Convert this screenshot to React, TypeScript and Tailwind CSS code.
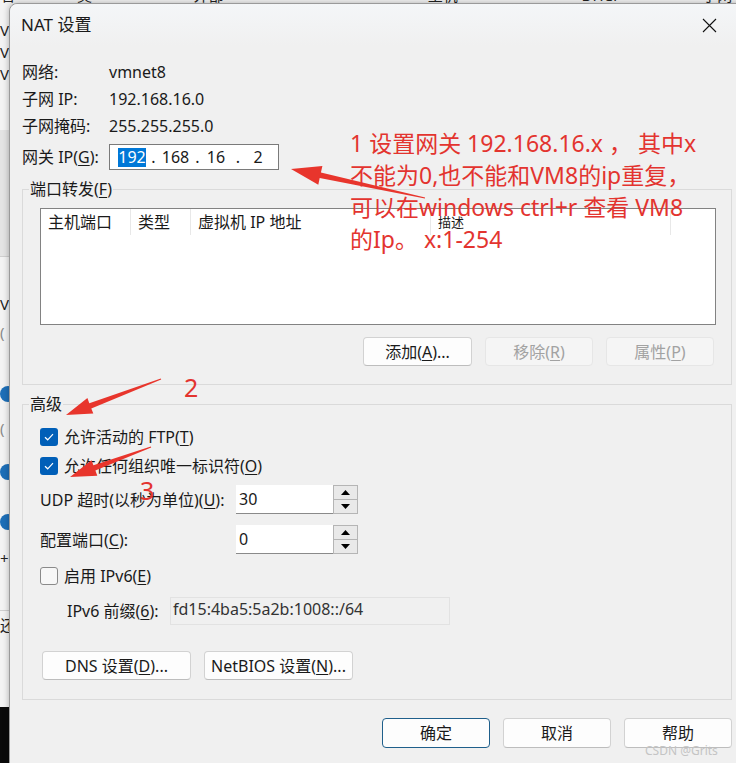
import React from "react";

// shared font stacks
const ui = { fontFamily: '"Noto Sans", "Noto Sans CJK SC", sans-serif' };
const red = { fontFamily: '"Noto Sans", "Noto Sans CJK SC", sans-serif' };

// underlined accelerator letter
const U: React.FC<{ c: string }> = ({ c }) => <span className="underline underline-offset-2">{c}</span>;

// red annotation arrow, tip is where it points
const Arrow: React.FC<{ x1: number; y1: number; x2: number; y2: number; head?: number }> = ({
  x1,
  y1,
  x2,
  y2,
  head = 26,
}) => {
  const dx = x2 - x1;
  const dy = y2 - y1;
  const len = Math.sqrt(dx * dx + dy * dy);
  const ux = dx / len;
  const uy = dy / len;
  const nx = -uy;
  const ny = ux;
  const bx = x2 - ux * head;
  const by = y2 - uy * head;
  const hw = head * 0.32;
  const p = (x: number, y: number) => `${x.toFixed(1)},${y.toFixed(1)}`;
  const pts = [
    p(x1 + nx * 0.6, y1 + ny * 0.6),
    p(bx + nx * 2.8, by + ny * 2.8),
    p(bx + nx * hw, by + ny * hw),
    p(x2, y2),
    p(bx - nx * hw, by - ny * hw),
    p(bx - nx * 2.8, by - ny * 2.8),
    p(x1 - nx * 0.6, y1 - ny * 0.6),
  ].join(" ");
  return <polygon points={pts} fill="#e8352c" />;
};

const Check: React.FC<{ on?: boolean }> = ({ on }) =>
  on ? (
    <span className="flex h-[18px] w-[18px] items-center justify-center rounded-[3px] bg-[#005fb8]">
      <svg width="10" height="8" viewBox="0 0 10 8">
        <path d="M1 4.2 L3.7 6.8 L9 1.2" fill="none" stroke="#fff" strokeWidth="1.2" />
      </svg>
    </span>
  ) : (
    <span className="h-[18px] w-[18px] rounded-[3px] border border-[#8a8a8a] bg-[#f7f7f7]" />
  );

const Btn: React.FC<{ children: React.ReactNode; w: string; disabled?: boolean; primary?: boolean }> = ({
  children,
  w,
  disabled,
  primary,
}) => (
  <div
    className={
      "flex h-[29px] items-center justify-center rounded-[4px] border text-[16px] " +
      w +
      (disabled
        ? " border-[#e6e6e6] bg-[#f5f5f5] text-[#a2a2a2]"
        : primary
        ? " border-[#1f5f8b] bg-[#fdfdfd] text-[#1a1a1a]"
        : " border-[#d2d2d2] border-b-[#bdbdbd] bg-[#fdfdfd] text-[#1a1a1a]")
    }
  >
    {children}
  </div>
);

const Spin: React.FC<{ value: string }> = ({ value }) => (
  <div className="flex h-[29px]">
    <div className="flex w-[97px] items-center border-b border-[#8a8a8a] bg-white pl-[3px]">{value}</div>
    <div className="flex w-[25px] flex-col border border-[#b5b5b5] bg-[#f0f0f0]">
      <div className="flex flex-1 items-center justify-center border-b border-[#b5b5b5] bg-[#e9e9e9]">
        <svg width="9" height="5" viewBox="0 0 9 5">
          <path d="M0 5 L4.5 0 L9 5 Z" fill="#000" />
        </svg>
      </div>
      <div className="flex flex-1 items-center justify-center bg-[#e9e9e9]">
        <svg width="9" height="5" viewBox="0 0 9 5">
          <path d="M0 0 L4.5 5 L9 0 Z" fill="#000" />
        </svg>
      </div>
    </div>
  </div>
);

// the NAT settings dialog
const App: React.FC = () => {
  return (
    <div className="relative h-[763px] w-[736px] overflow-hidden bg-[#f3f3f3] text-[#1a1a1a]" style={ui}>
      {/* window behind the dialog */}
      <div className="absolute inset-0 text-[15px] text-[#222]">
        <div className="-mt-[15px] flex h-[20px] gap-[60px] overflow-hidden pl-[0px] leading-[20px]">
          <span>名称</span>
          <span>类型</span>
          <span className="ml-[40px]">外部连接</span>
          <span className="ml-[140px]">主机连接</span>
          <span className="ml-[60px]">DHCP</span>
          <span className="ml-[20px]">子网地址</span>
        </div>
        <div className="flex flex-col pl-[0px] leading-[22px]">
          <span className="mt-[14px]">VI</span>
          <span>VI</span>
          <span>VI</span>
        </div>
        <div className="mt-[45px] h-[127px] border-b border-[#cfcfcf] bg-[#e4e4e4]" />
        <div className="flex flex-col leading-[28px]">
          <span className="mt-[33px]">VI</span>
          <span className="text-[#888]">(</span>
          <span className="mt-[40px] h-[16px] w-[16px] rounded-full bg-[#1d6fb8]" />
          <span className="mt-[12px] text-[#888]">(</span>
          <span className="mt-[22px] h-[16px] w-[16px] rounded-full bg-[#1d6fb8]" />
          <span className="mt-[34px] h-[16px] w-[16px] rounded-full bg-[#1d6fb8]" />
          <span className="mt-[14px]">+</span>
          <span className="mt-[38px] border-t border-[#cfcfcf]">还</span>
        </div>
        <div className="absolute bottom-0 left-0 h-[56px] w-[12px] bg-[#0a0a0a]" />
      </div>

      {/* dialog */}
      <div className="absolute left-[9px] top-[3px] h-[780px] w-[760px] rounded-[8px] border border-[#9a9a9a] bg-[#f0f0f0] text-[16px] shadow-[0_0_6px_rgba(0,0,0,0.3)]">
        <div className="flex h-[42px] items-center rounded-t-[8px] bg-gradient-to-b from-[#f4f6f8] to-[#f0f0f0] pl-[11px]">
          <span className="w-[678px] text-[17px]">NAT 设置</span>
          <span className="flex w-[20px] justify-center">
            <svg width="15" height="15" viewBox="0 0 15 15">
              <path d="M1 1 L14 14 M14 1 L1 14" stroke="#111" strokeWidth="1.1" />
            </svg>
          </span>
        </div>

        <div className="pl-[12px] pt-[12px]">
          <div className="flex h-[27px] items-center">
            <span className="w-[87px]">网络:</span>
            <span>vmnet8</span>
          </div>
          <div className="flex h-[27px] items-center">
            <span className="w-[87px]">子网 IP:</span>
            <span>192.168.16.0</span>
          </div>
          <div className="flex h-[28px] items-center">
            <span className="w-[87px]">子网掩码:</span>
            <span>255.255.255.0</span>
          </div>
          <div className="mt-[4px] flex h-[26px] items-center">
            <span className="w-[87px]">
              网关 IP(<U c="G" />):
            </span>
            <div className="flex h-[26px] w-[170px] items-center border border-[#7a7a7a] bg-white pl-[8px]">
              <span className="w-[28px] bg-[#0078d7] text-center leading-[19px] text-white">192</span>
              <span className="w-[15px] text-center">.</span>
              <span className="w-[29px] text-center">168</span>
              <span className="w-[15px] text-center">.</span>
              <span className="w-[22px] text-center">16</span>
              <span className="w-[22px] text-center">.</span>
              <span className="w-[18px] text-center">2</span>
            </div>
          </div>

          {/* port forwarding */}
          <div className="relative mt-[19px] h-[196px] w-[710px] border border-[#dadada] pl-[17px] pt-[18px]">
            <span className="absolute left-[6px] top-[-11px] bg-[#f0f0f0] px-[1px] leading-[20px]">
              端口转发(<U c="F" />)
            </span>
            <div className="h-[117px] w-[676px] border border-[#828282] bg-white">
              <div className="flex h-[26px] items-center">
                <span className="flex h-full w-[90px] items-center border-r border-[#e8e8e8] pl-[7px]">主机端口</span>
                <span className="flex h-full w-[60px] items-center border-r border-[#e8e8e8] pl-[7px]">类型</span>
                <span className="flex h-full w-[240px] items-center border-r border-[#e8e8e8] pl-[7px]">虚拟机 IP 地址</span>
                <span
                  className="flex h-full w-[240px] items-center border-r border-[#e8e8e8] pl-[7px] text-[13px]"
                  style={{ fontFamily: '"Noto Sans CJK SC", sans-serif' }}
                >
                  描述
                </span>
              </div>
            </div>
            <div className="mt-[12px] flex w-[676px] justify-end gap-[13px] pr-[2px]">
              <Btn w="w-[109px]">
                添加(<U c="A" />)...
              </Btn>
              <Btn w="w-[108px]" disabled>
                移除(<U c="R" />)
              </Btn>
              <Btn w="w-[108px]" disabled>
                属性(<U c="P" />)
              </Btn>
            </div>
          </div>

          {/* advanced */}
          <div className="relative mt-[19px] h-[296px] w-[710px] border border-[#dadada] pl-[17px] pt-[17px]">
            <span className="absolute left-[6px] top-[-11px] bg-[#f0f0f0] px-[1px] leading-[20px]">高级</span>
            <div className="flex h-[29px] items-center gap-[6px]">
              <Check on />
              <span>
                允许活动的 FTP(<U c="T" />)
              </span>
            </div>
            <div className="flex h-[29px] items-center gap-[6px]">
              <Check on />
              <span>
                允许任何组织唯一标识符(<U c="O" />)
              </span>
            </div>
            <div className="mt-[5px] flex items-center">
              <span className="w-[196px]">
                UDP 超时(以秒为单位)(<U c="U" />):
              </span>
              <Spin value="30" />
            </div>
            <div className="mt-[11px] flex items-center">
              <span className="w-[196px]">
                配置端口(<U c="C" />):
              </span>
              <Spin value="0" />
            </div>
            <div className="mt-[7px] flex h-[29px] items-center gap-[6px]">
              <Check />
              <span>
                启用 IPv6(<U c="E" />)
              </span>
            </div>
            <div className="mt-[7px] flex h-[28px] items-center pl-[27px]">
              <span className="w-[103px]">
                IPv6 前缀(<U c="6" />):
              </span>
              <div className="flex h-[28px] w-[280px] items-start border border-[#e2e2e2] bg-[#f0f0f0] pl-[2px] leading-[22px] text-[#333]">
                fd15:4ba5:5a2b:1008::/64
              </div>
            </div>
            <div className="ml-[2px] mt-[26px] flex gap-[13px]">
              <Btn w="w-[149px]">
                DNS 设置(<U c="D" />)...
              </Btn>
              <Btn w="w-[149px]">
                NetBIOS 设置(<U c="N" />)...
              </Btn>
            </div>
          </div>

          <div className="mt-[18px] flex w-[710px] justify-end gap-[13px]">
            <Btn w="w-[108px] h-[30px]" primary>
              确定
            </Btn>
            <Btn w="w-[108px] h-[30px]">取消</Btn>
            <Btn w="w-[108px] h-[30px]">帮助</Btn>
          </div>
        </div>
      </div>

      {/* annotations drawn over the screenshot */}
      <svg className="absolute left-0 top-0" width="736" height="763">
        <Arrow x1={425} y1={198} x2={291} y2={169} head={30} />
        <Arrow x1={161} y1={379} x2={66} y2={415} />
        <Arrow x1={151} y1={447} x2={70} y2={477} />
      </svg>
      <div className="absolute left-[350px] top-[127px] text-[23px] leading-[32px] text-[#e3342f]" style={red}>
        <div>1 设置网关 192.168.16.x ， 其中x</div>
        <div>不能为0,也不能和VM8的ip重复，</div>
        <div>可以在windows ctrl+r 查看 VM8</div>
        <div>的Ip。 x:1-254</div>
      </div>
      <span className="absolute left-[184px] top-[371px] text-[25px] leading-[32px] text-[#e3342f]" style={red}>
        2
      </span>
      <span className="absolute left-[140px] top-[474px] text-[25px] leading-[32px] text-[#e3342f]" style={red}>
        3
      </span>
      <span className="absolute left-[645px] top-[742px] text-[12px] text-[#c4c4c4]">CSDN @Grits</span>
    </div>
  );
};

export default App;
